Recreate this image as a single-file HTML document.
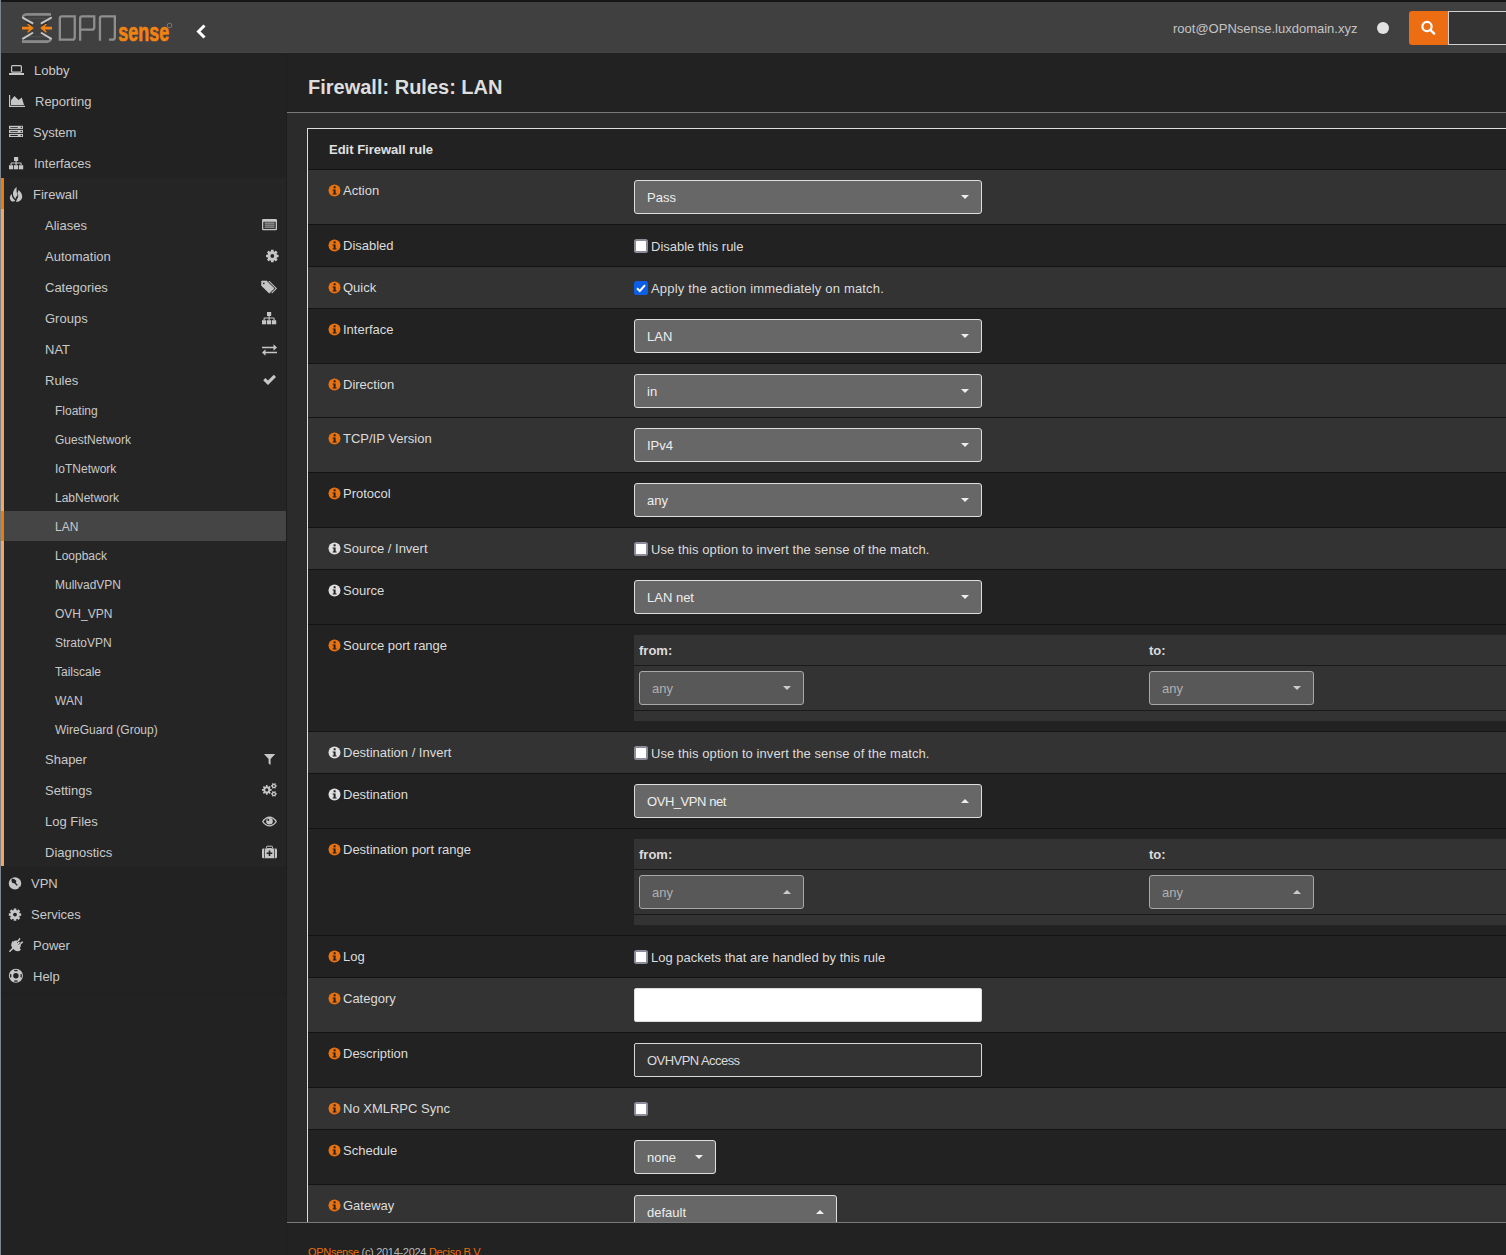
<!DOCTYPE html><html><head><meta charset="utf-8"><style>
*{margin:0;padding:0;box-sizing:border-box}
html,body{width:1506px;height:1255px;overflow:hidden;background:#222;font-family:"Liberation Sans",sans-serif;}
div,span,svg{position:absolute}
.t{white-space:nowrap;color:#c9c9c9;font-size:13px;line-height:15px}
.lbl{white-space:nowrap;color:#dcdcdc;font-size:13px;line-height:15px}
.sel{background:#676767;border:1.5px solid #dedede;border-radius:3px;color:#eee;font-size:13px;line-height:15px}
.sel span{left:12px;top:9px;white-space:nowrap}
.sel.dis{background:#585858;border:1px solid #a8a8a8;color:#b0b0b0}
.car{top:14px;width:0;height:0;border-left:4px solid transparent;border-right:4px solid transparent;border-top:4px solid #eee}
.car.up{top:14px;border-top:none;border-bottom:4px solid #eee}
.dis .car{border-top-color:#ccc}
.dis .car.up{border-bottom-color:#ccc}
.cb{width:14px;height:14px;background:#fff;border:1.5px solid #908e9e;border-radius:2.5px}
</style></head><body>
<div style="left:0px;top:0px;width:1506px;height:2px;background:#161616;"></div>
<div style="left:0px;top:2px;width:1506px;height:51px;background:#404040;"></div>
<div style="left:0px;top:52px;width:1506px;height:1px;background:#454545;"></div>
<div style="left:0px;top:53px;width:287px;height:1202px;background:#222;"></div>
<div style="left:1px;top:178px;width:285px;height:688px;background:#252525;"></div>
<div style="left:286px;top:53px;width:1px;height:1202px;background:#1e1e1e;"></div>
<div style="left:1px;top:53px;width:1505px;height:1px;background:#1f1f1f;"></div>
<div style="left:1px;top:993px;width:285px;height:1px;background:#1f1f1f;"></div>
<div style="left:0px;top:0px;width:1px;height:1255px;background:#7d858c;z-index:9"></div>
<div style="left:1px;top:178px;width:3px;height:31px;background:#f27a00;"></div>
<div style="left:1px;top:209px;width:3px;height:657px;background:#f6a55c;"></div>
<div style="left:1px;top:511px;width:285px;height:30px;background:#454545;"></div>
<div style="left:1px;top:511px;width:3px;height:30px;background:#f27a00;"></div>
<div style="left:287px;top:54px;width:1219px;height:58px;background:#222;"></div>
<div style="left:287px;top:112px;width:1219px;height:1px;background:#7a7a7a;"></div>
<div style="left:287px;top:113px;width:1219px;height:1109px;background:#2b2b2b;"></div>
<div style="left:287px;top:1222px;width:1219px;height:1px;background:#7a7a7a;"></div>
<div style="left:287px;top:1223px;width:1219px;height:32px;background:#222;"></div>
<svg style="left:20px;top:10px" width="160" height="36" viewBox="20 10 160 36">
<path d="M26 14.4 H51" stroke="#8a8a8a" stroke-width="2.7"/>
<path d="M22 41.6 H48" stroke="#8a8a8a" stroke-width="2.9"/>
<path d="M22.8 17.6 Q23 14.4 26.5 14.4" stroke="#8a8a8a" stroke-width="2.2" fill="none"/>
<path d="M50.6 38.8 Q50.4 41.6 47 41.6" stroke="#8a8a8a" stroke-width="2.2" fill="none"/>
<path d="M28 18.4 H46 M28 36.7 H46" stroke="#505050" stroke-width="1"/>
<g stroke="#c4c4c4" stroke-width="2" fill="none" stroke-linecap="round">
<path d="M23 17.8 L32.4 23.2"/><path d="M51 17.8 L41.6 23.2"/>
<path d="M23 38.6 L32.4 33"/><path d="M51 38.6 L41.6 33"/>
</g>
<g stroke="#1a1a1a" stroke-width="1" fill="none">
<path d="M26.5 22.4 L31.6 25.4"/><path d="M47.5 22.4 L42.4 25.4"/>
</g>
<g fill="#f28312" stroke="none">
<path d="M22 26.8 H29.2 L27 24 L28.4 23.8 L33.8 28.1 L28.4 32.5 L27 32.3 L29.2 29.4 H22 Z"/>
<path d="M52 26.8 H44.8 L47 24 L45.6 23.8 L40.2 28.1 L45.6 32.5 L47 32.3 L44.8 29.4 H52 Z"/>
</g>
<g fill="none" stroke="#8e8e8e" stroke-width="2.3">
<path d="M59.85 39.65 V18.35 Q59.85 16.35 61.85 16.35 H74.75 V37.15 Q74.75 39.65 72.25 39.65 Z"/>
<path d="M80.15 40.8 V18.35 Q80.15 16.35 82.15 16.35 H94.25 V27.15 Q94.25 29.65 91.75 29.65 H80.15"/>
<path d="M99.95 40.8 V18.35 Q99.95 16.35 101.95 16.35 H114.85 V37.15 Q114.85 39.65 112.35 39.65 H109"/>
</g>
<text x="118.3" y="41" font-family="Liberation Sans" font-weight="bold" font-size="25.5" fill="#f28312" stroke="#f28312" stroke-width="0.7" textLength="50.8" lengthAdjust="spacingAndGlyphs">sense</text>
<circle cx="169.5" cy="25.5" r="2.3" fill="none" stroke="#888" stroke-width="0.8"/>
</svg>
<svg style="left:194px;top:22px" width="16" height="20" viewBox="0 0 16 20"><path d="M10.5 3.5 L4.5 9.5 L10.5 15.5" fill="none" stroke="#fff" stroke-width="3"/></svg>
<span class="t" style="left:1173px;top:21px;color:#c4c4c4">root@OPNsense.luxdomain.xyz</span>
<div style="left:1377px;top:22px;width:12px;height:12px;background:#e2e2e2;border-radius:50%"></div>
<div style="left:1409px;top:11px;width:39px;height:34px;background:#ec6d12;border-radius:3px 0 0 3px"></div>
<svg style="left:1419px;top:18px" width="18" height="18" viewBox="0 0 18 18"><circle cx="8" cy="8.5" r="4.6" fill="none" stroke="#fff" stroke-width="2.2"/><path d="M11.3 11.8 L15.2 15.6" stroke="#fff" stroke-width="2.4" stroke-linecap="round"/></svg>
<div style="left:1448px;top:11px;width:70px;height:34px;background:#333;border:1px solid #d0d0d0"></div>
<span class="t" style="left:34px;top:63px;">Lobby</span>
<span class="t" style="left:35px;top:94px;">Reporting</span>
<span class="t" style="left:33px;top:125px;">System</span>
<span class="t" style="left:34px;top:156px;">Interfaces</span>
<span class="t" style="left:33px;top:187px;">Firewall</span>
<span class="t" style="left:45px;top:218px;">Aliases</span>
<span class="t" style="left:45px;top:249px;">Automation</span>
<span class="t" style="left:45px;top:280px;">Categories</span>
<span class="t" style="left:45px;top:311px;">Groups</span>
<span class="t" style="left:45px;top:342px;">NAT</span>
<span class="t" style="left:45px;top:373px;">Rules</span>
<span class="t" style="left:55px;top:404px;font-size:12px;line-height:14px">Floating</span>
<span class="t" style="left:55px;top:433px;font-size:12px;line-height:14px">GuestNetwork</span>
<span class="t" style="left:55px;top:462px;font-size:12px;line-height:14px">IoTNetwork</span>
<span class="t" style="left:55px;top:491px;font-size:12px;line-height:14px">LabNetwork</span>
<span class="t" style="left:55px;top:520px;font-size:12px;line-height:14px">LAN</span>
<span class="t" style="left:55px;top:549px;font-size:12px;line-height:14px">Loopback</span>
<span class="t" style="left:55px;top:578px;font-size:12px;line-height:14px">MullvadVPN</span>
<span class="t" style="left:55px;top:607px;font-size:12px;line-height:14px">OVH_VPN</span>
<span class="t" style="left:55px;top:636px;font-size:12px;line-height:14px">StratoVPN</span>
<span class="t" style="left:55px;top:665px;font-size:12px;line-height:14px">Tailscale</span>
<span class="t" style="left:55px;top:694px;font-size:12px;line-height:14px">WAN</span>
<span class="t" style="left:55px;top:723px;font-size:12px;line-height:14px">WireGuard (Group)</span>
<span class="t" style="left:45px;top:752px;">Shaper</span>
<span class="t" style="left:45px;top:783px;">Settings</span>
<span class="t" style="left:45px;top:814px;">Log Files</span>
<span class="t" style="left:45px;top:845px;">Diagnostics</span>
<span class="t" style="left:31px;top:876px;">VPN</span>
<span class="t" style="left:31px;top:907px;">Services</span>
<span class="t" style="left:33px;top:938px;">Power</span>
<span class="t" style="left:33px;top:969px;">Help</span>
<svg style="left:8px;top:64px" width="17" height="12" viewBox="8 64 17 12"><rect x="11.6" y="65.6" width="9.8" height="6.6" rx="1" fill="none" stroke="#c6c6c6" stroke-width="1.2"/><rect x="9" y="73" width="15" height="2" fill="#c6c6c6"/></svg><svg style="left:8px;top:94px" width="18" height="14" viewBox="8 94 18 14"><path d="M9.6 95 V106.4 H25" fill="none" stroke="#c6c6c6" stroke-width="1.2"/><path d="M11 100.2 L14.4 96 L18.6 100 L21.8 97.6 L24 105 H11 Z" fill="#c6c6c6"/></svg><svg style="left:8px;top:124px" width="17" height="15" viewBox="8 124 17 15"><rect x="9" y="125.80" width="14" height="3.1" fill="#c6c6c6"/><rect x="10.2" y="126.90" width="7.8" height="0.9" rx="0.45" fill="#222"/><circle cx="21.3" cy="127.35" r="0.75" fill="#222"/><rect x="9" y="129.85" width="14" height="3.1" fill="#c6c6c6"/><rect x="10.2" y="130.95" width="7.8" height="0.9" rx="0.45" fill="#222"/><circle cx="21.3" cy="131.40" r="0.75" fill="#222"/><rect x="9" y="133.90" width="14" height="3.1" fill="#c6c6c6"/><rect x="10.2" y="135.00" width="7.8" height="0.9" rx="0.45" fill="#222"/><circle cx="21.3" cy="135.45" r="0.75" fill="#222"/></svg><svg style="left:8px;top:156px" width="16" height="14" viewBox="8 156 16 14"><rect x="14" y="157" width="4.2" height="4" fill="#c6c6c6"/><path d="M16.1 161 V163.2 M11.1 165 V163.6 Q11.1 163 11.8 163 H20.4 Q21.1 163 21.1 163.6 V165 M16.1 163 V165" stroke="#c6c6c6" stroke-width="1.1" fill="none"/><rect x="9" y="165.2" width="4.2" height="4.1" fill="#c6c6c6"/><rect x="14" y="165.2" width="4.2" height="4.1" fill="#c6c6c6"/><rect x="19" y="165.2" width="4.2" height="4.1" fill="#c6c6c6"/></svg><svg style="left:9px;top:186px" width="14" height="17" viewBox="9 186 14 17"><path d="M16.6 187 C14.2 189 12.6 191.5 13 194.6 C13.3 196.5 14.6 197.8 15.4 199 C15.8 197.6 16.2 196.2 17.6 195.4 C16.6 193 16.4 190 16.6 187 Z" fill="#c6c6c6"/><path d="M18.4 190 C18.3 191.5 17.7 192.6 17.1 193.2 C18 194 18.5 195 18.2 196.4 C17.8 198 16.4 199.4 16.2 202 C19.6 202.2 22.2 199.8 22.2 196.6 C22.2 193.8 20.4 191.6 18.4 190 Z" fill="#c6c6c6"/><path d="M11.6 194 C10.4 195.4 9.8 196.8 9.9 198.2 C10 200.2 11.4 201.6 13.2 201.6 C14.2 201.6 14.8 201 15.1 200.4 C13.6 199.2 12.6 198 12.2 196.8 C12 196 11.8 195 11.6 194 Z" fill="#c6c6c6"/></svg><svg style="left:261px;top:218px" width="17" height="13" viewBox="261 218 17 13"><rect x="262" y="219" width="15" height="11.2" rx="1.3" fill="#c6c6c6"/><rect x="263.3" y="221.8" width="12.4" height="7.1" fill="#252525"/><rect x="264.6" y="222.6" width="10" height="1" fill="#c6c6c6"/><rect x="264.6" y="224.6" width="10" height="1" fill="#c6c6c6"/><rect x="264.6" y="226.6" width="10" height="1" fill="#c6c6c6"/></svg><svg style="left:265px;top:249px" width="15" height="15" viewBox="265 249 15 15"><path d="M277.03 254.73 L278.55 254.63 L278.55 257.37 L277.03 257.27 L276.55 258.44 L277.69 259.45 L275.75 261.39 L274.74 260.25 L273.57 260.73 L273.67 262.25 L270.93 262.25 L271.03 260.73 L269.86 260.25 L268.85 261.39 L266.91 259.45 L268.05 258.44 L267.57 257.27 L266.05 257.37 L266.05 254.63 L267.57 254.73 L268.05 253.56 L266.91 252.55 L268.85 250.61 L269.86 251.75 L271.03 251.27 L270.93 249.75 L273.67 249.75 L273.57 251.27 L274.74 251.75 L275.75 250.61 L277.69 252.55 L276.55 253.56 Z" fill="#c6c6c6"/><circle cx="272.3" cy="256" r="1.9" fill="#252525"/></svg><svg style="left:260px;top:280px" width="19" height="15" viewBox="260 280 19 15"><path d="M261.6 281 H266.6 L274.2 288.4 L269.2 293.2 L261.6 285.8 Z" fill="#c6c6c6" stroke="#c6c6c6" stroke-width="0.6" stroke-linejoin="round"/><circle cx="263.8" cy="283.3" r="0.9" fill="#252525"/><path d="M268.2 281 H269.6 L277 288.4 L272 293.4 L271.3 292.7 L275.6 288.4 Z" fill="#c6c6c6"/></svg><svg style="left:261px;top:311px" width="17" height="15" viewBox="261 311 17 15"><rect x="267" y="312" width="4.2" height="4" fill="#c6c6c6"/><path d="M269.1 316 V318.2 M264.1 320 V318.6 Q264.1 318 264.8 318 H273.4 Q274.1 318 274.1 318.6 V320 M269.1 318 V320" stroke="#c6c6c6" stroke-width="1.1" fill="none"/><rect x="262" y="320.2" width="4.2" height="4.1" fill="#c6c6c6"/><rect x="267" y="320.2" width="4.2" height="4.1" fill="#c6c6c6"/><rect x="272" y="320.2" width="4.2" height="4.1" fill="#c6c6c6"/></svg><svg style="left:261px;top:343px" width="17" height="13" viewBox="261 343 17 13"><path d="M262 346.8 H273.5 V344.3 L277 347.5 L273.5 350.7 V348.2 H262 Z" fill="#c6c6c6"/><path d="M277 351.8 H265.5 V349.3 L262 352.5 L265.5 355.7 V353.2 H277 Z" fill="#c6c6c6"/></svg><svg style="left:262px;top:374px" width="15" height="12" viewBox="262 374 15 12"><path d="M263.2 380.2 L265.4 378 L268 380.6 L273.8 374.8 L276 377 L268 385 Z" fill="#c6c6c6"/></svg><svg style="left:263px;top:753px" width="13" height="13" viewBox="263 753 13 13"><path d="M264 754 H275.2 L270.6 759 V765 L268.6 763.4 V759 Z" fill="#c6c6c6"/></svg><svg style="left:260px;top:781px" width="19" height="18" viewBox="260 781 19 18"><path d="M270.31 789.10 L271.62 789.04 L271.62 790.76 L270.31 790.70 L269.85 791.82 L270.82 792.70 L269.60 793.92 L268.72 792.95 L267.60 793.41 L267.66 794.72 L265.94 794.72 L266.00 793.41 L264.88 792.95 L264.00 793.92 L262.78 792.70 L263.75 791.82 L263.29 790.70 L261.98 790.76 L261.98 789.04 L263.29 789.10 L263.75 787.98 L262.78 787.10 L264.00 785.88 L264.88 786.85 L266.00 786.39 L265.94 785.08 L267.66 785.08 L267.60 786.39 L268.72 786.85 L269.60 785.88 L270.82 787.10 L269.85 787.98 Z" fill="#c6c6c6"/><circle cx="266.8" cy="789.9" r="1.6" fill="#252525"/><path d="M276.01 785.29 L276.83 785.25 L276.83 786.55 L276.01 786.51 L275.49 787.42 L275.93 788.11 L274.80 788.76 L274.42 788.04 L273.38 788.04 L273.00 788.76 L271.87 788.11 L272.31 787.42 L271.79 786.51 L270.97 786.55 L270.97 785.25 L271.79 785.29 L272.31 784.38 L271.87 783.69 L273.00 783.04 L273.38 783.76 L274.42 783.76 L274.80 783.04 L275.93 783.69 L275.49 784.38 Z" fill="#c6c6c6"/><circle cx="273.9" cy="785.9" r="0.95" fill="#252525"/><path d="M276.01 793.29 L276.83 793.25 L276.83 794.55 L276.01 794.51 L275.49 795.42 L275.93 796.11 L274.80 796.76 L274.42 796.04 L273.38 796.04 L273.00 796.76 L271.87 796.11 L272.31 795.42 L271.79 794.51 L270.97 794.55 L270.97 793.25 L271.79 793.29 L272.31 792.38 L271.87 791.69 L273.00 791.04 L273.38 791.76 L274.42 791.76 L274.80 791.04 L275.93 791.69 L275.49 792.38 Z" fill="#c6c6c6"/><circle cx="273.9" cy="793.9" r="0.95" fill="#252525"/></svg><svg style="left:261px;top:815px" width="17" height="13" viewBox="261 815 17 13"><path d="M262 821.5 C264 818 267 816.6 269.5 816.6 C272 816.6 275 818 277 821.5 C275 825 272 826.5 269.5 826.5 C267 826.5 264 825 262 821.5 Z" fill="#c6c6c6"/><path d="M263.5 821.5 C265 819 267.5 818 269.5 818 C271.5 818 274 819 275.5 821.5 C274 824 271.5 825.2 269.5 825.2 C267.5 825.2 265 824 263.5 821.5 Z" fill="#252525"/><circle cx="269.5" cy="821.2" r="3.3" fill="#c6c6c6"/><circle cx="268.3" cy="820" r="1" fill="#252525"/></svg><svg style="left:261px;top:845px" width="17" height="14" viewBox="261 845 17 14"><rect x="266.5" y="846.2" width="6" height="2.4" rx="0.8" fill="none" stroke="#c6c6c6" stroke-width="1"/><rect x="262" y="848.4" width="15" height="9.9" rx="1.4" fill="#c6c6c6"/><rect x="264.2" y="848.4" width="0.7" height="9.9" fill="#252525"/><rect x="274.1" y="848.4" width="0.7" height="9.9" fill="#252525"/><path d="M268.7 850.5 H270.3 V852.5 H272.3 V854.1 H270.3 V856.1 H268.7 V854.1 H266.7 V852.5 H268.7 Z" fill="#252525"/></svg><svg style="left:8px;top:876px" width="15" height="15" viewBox="8 876 15 15"><circle cx="15" cy="883.4" r="6.2" fill="#c6c6c6"/><path d="M12 878.6 L14.6 879.2 L16.4 881 L15.8 883 L17.6 884.6 L17 886 L14.6 883.6 L12.2 882.8 L11.4 880.6 Z" fill="#222"/><path d="M18.6 887.6 L19.6 886.4 L20.4 887.2 L19.4 888.4 Z" fill="#222"/></svg><svg style="left:8px;top:907px" width="15" height="15" viewBox="8 907 15 15"><path d="M19.63 913.35 L21.15 913.25 L21.15 915.95 L19.63 915.85 L19.16 916.99 L20.31 918.00 L18.40 919.91 L17.39 918.76 L16.25 919.23 L16.35 920.75 L13.65 920.75 L13.75 919.23 L12.61 918.76 L11.60 919.91 L9.69 918.00 L10.84 916.99 L10.37 915.85 L8.85 915.95 L8.85 913.25 L10.37 913.35 L10.84 912.21 L9.69 911.20 L11.60 909.29 L12.61 910.44 L13.75 909.97 L13.65 908.45 L16.35 908.45 L16.25 909.97 L17.39 910.44 L18.40 909.29 L20.31 911.20 L19.16 912.21 Z" fill="#c6c6c6"/><circle cx="15" cy="914.6" r="1.9" fill="#222"/></svg><svg style="left:8px;top:936px" width="17" height="17" viewBox="8 936 17 17"><path d="M9.9 951.2 L12.6 948.5" stroke="#c6c6c6" stroke-width="1.6" stroke-linecap="round"/><path d="M12.6 941 L21 949.4 A4.9 4.9 0 0 1 15 950.6 L14.2 949.8 A5.94 5.94 0 0 1 12.6 941 Z" fill="#c6c6c6"/><circle cx="16.2" cy="945.2" r="4.6" fill="#c6c6c6"/><path d="M17.8 941.6 L19.6 938.9 M19.6 944.4 L22.3 942.2" stroke="#c6c6c6" stroke-width="1.6" stroke-linecap="round"/><path d="M17.2 942.8 L18.6 941.4 M18.6 944.6 L20 943.2" stroke="#222" stroke-width="0.9"/></svg><svg style="left:8px;top:968px" width="16" height="16" viewBox="8 968 16 16"><circle cx="15.9" cy="975.8" r="7" fill="#c6c6c6"/><circle cx="15.9" cy="975.8" r="2.7" fill="#222"/><rect x="14.25" y="969.9" width="3.3" height="1.3" fill="#222"/><rect x="14.25" y="980.4" width="3.3" height="1.3" fill="#222"/><rect x="10.0" y="974.15" width="1.3" height="3.3" fill="#222"/><rect x="20.5" y="974.15" width="1.3" height="3.3" fill="#222"/></svg>
<span class="t" style="left:308px;top:76px;font-size:20px;line-height:23px;font-weight:bold;color:#dedede">Firewall: Rules: LAN</span>
<div style="left:307px;top:128px;width:1199px;height:1px;background:#dcdcdc;"></div>
<div style="left:307px;top:128px;width:1px;height:1094px;background:#dcdcdc;"></div>
<div style="left:308px;top:129px;width:1198px;height:40px;background:#222;"></div>
<span class="lbl" style="left:329px;top:142px;font-weight:bold;color:#e0e0e0">Edit Firewall rule</span>
<div style="left:308px;top:169px;width:1198px;height:1px;background:#141414;"></div>
<div style="left:308px;top:170px;width:1198px;height:54px;background:#333;"></div>
<div style="left:308px;top:224px;width:1198px;height:1px;background:#141414;"></div>
<svg style="left:328px;top:184px" width="13" height="13" viewBox="0 0 13 13"><circle cx="6.5" cy="6.5" r="6" fill="#ea7210"/><rect x="5.6" y="2.3" width="2" height="2" fill="#222"/><path d="M4.6 5.4 H7.6 V9.6 H8.6 V10.6 H4.6 V9.6 H5.6 V6.4 H4.6 Z" fill="#222"/></svg>
<span class="lbl" style="left:343px;top:183px;">Action</span>
<div class="sel" style="left:634px;top:180px;width:348px;height:34px"><span style="">Pass</span><div class="car" style="right:12px"></div></div>
<div style="left:308px;top:225px;width:1198px;height:41px;background:#222;"></div>
<div style="left:308px;top:266px;width:1198px;height:1px;background:#141414;"></div>
<svg style="left:328px;top:239px" width="13" height="13" viewBox="0 0 13 13"><circle cx="6.5" cy="6.5" r="6" fill="#ea7210"/><rect x="5.6" y="2.3" width="2" height="2" fill="#222"/><path d="M4.6 5.4 H7.6 V9.6 H8.6 V10.6 H4.6 V9.6 H5.6 V6.4 H4.6 Z" fill="#222"/></svg>
<span class="lbl" style="left:343px;top:238px;">Disabled</span>
<svg style="left:634px;top:239px" width="14" height="14" viewBox="0 0 14 14"><rect x="1" y="1" width="12" height="12" rx="1.5" fill="#fff" stroke="#8e8c9a" stroke-width="2"/></svg>
<span class="lbl" style="left:651px;top:239px;">Disable this rule</span>
<div style="left:308px;top:267px;width:1198px;height:41px;background:#333;"></div>
<div style="left:308px;top:308px;width:1198px;height:1px;background:#141414;"></div>
<svg style="left:328px;top:281px" width="13" height="13" viewBox="0 0 13 13"><circle cx="6.5" cy="6.5" r="6" fill="#ea7210"/><rect x="5.6" y="2.3" width="2" height="2" fill="#222"/><path d="M4.6 5.4 H7.6 V9.6 H8.6 V10.6 H4.6 V9.6 H5.6 V6.4 H4.6 Z" fill="#222"/></svg>
<span class="lbl" style="left:343px;top:280px;">Quick</span>
<svg style="left:634px;top:281px" width="14" height="14" viewBox="0 0 14 14"><rect x="0" y="0" width="14" height="14" rx="2.5" fill="#0b5fe6"/><path d="M3 7.2 L5.8 10 L11 4.2" fill="none" stroke="#fff" stroke-width="2"/></svg>
<span class="lbl" style="left:651px;top:281px;letter-spacing:0.18px">Apply the action immediately on match.</span>
<div style="left:308px;top:309px;width:1198px;height:54px;background:#222;"></div>
<div style="left:308px;top:363px;width:1198px;height:1px;background:#141414;"></div>
<svg style="left:328px;top:323px" width="13" height="13" viewBox="0 0 13 13"><circle cx="6.5" cy="6.5" r="6" fill="#ea7210"/><rect x="5.6" y="2.3" width="2" height="2" fill="#222"/><path d="M4.6 5.4 H7.6 V9.6 H8.6 V10.6 H4.6 V9.6 H5.6 V6.4 H4.6 Z" fill="#222"/></svg>
<span class="lbl" style="left:343px;top:322px;">Interface</span>
<div class="sel" style="left:634px;top:319px;width:348px;height:34px"><span style="">LAN</span><div class="car" style="right:12px"></div></div>
<div style="left:308px;top:364px;width:1198px;height:53px;background:#333;"></div>
<div style="left:308px;top:417px;width:1198px;height:1px;background:#141414;"></div>
<svg style="left:328px;top:378px" width="13" height="13" viewBox="0 0 13 13"><circle cx="6.5" cy="6.5" r="6" fill="#ea7210"/><rect x="5.6" y="2.3" width="2" height="2" fill="#222"/><path d="M4.6 5.4 H7.6 V9.6 H8.6 V10.6 H4.6 V9.6 H5.6 V6.4 H4.6 Z" fill="#222"/></svg>
<span class="lbl" style="left:343px;top:377px;">Direction</span>
<div class="sel" style="left:634px;top:374px;width:348px;height:34px"><span style="">in</span><div class="car" style="right:12px"></div></div>
<div style="left:308px;top:418px;width:1198px;height:54px;background:#333;"></div>
<div style="left:308px;top:472px;width:1198px;height:1px;background:#141414;"></div>
<svg style="left:328px;top:432px" width="13" height="13" viewBox="0 0 13 13"><circle cx="6.5" cy="6.5" r="6" fill="#ea7210"/><rect x="5.6" y="2.3" width="2" height="2" fill="#222"/><path d="M4.6 5.4 H7.6 V9.6 H8.6 V10.6 H4.6 V9.6 H5.6 V6.4 H4.6 Z" fill="#222"/></svg>
<span class="lbl" style="left:343px;top:431px;">TCP/IP Version</span>
<div class="sel" style="left:634px;top:428px;width:348px;height:34px"><span style="">IPv4</span><div class="car" style="right:12px"></div></div>
<div style="left:308px;top:473px;width:1198px;height:54px;background:#222;"></div>
<div style="left:308px;top:527px;width:1198px;height:1px;background:#141414;"></div>
<svg style="left:328px;top:487px" width="13" height="13" viewBox="0 0 13 13"><circle cx="6.5" cy="6.5" r="6" fill="#ea7210"/><rect x="5.6" y="2.3" width="2" height="2" fill="#222"/><path d="M4.6 5.4 H7.6 V9.6 H8.6 V10.6 H4.6 V9.6 H5.6 V6.4 H4.6 Z" fill="#222"/></svg>
<span class="lbl" style="left:343px;top:486px;">Protocol</span>
<div class="sel" style="left:634px;top:483px;width:348px;height:34px"><span style="">any</span><div class="car" style="right:12px"></div></div>
<div style="left:308px;top:528px;width:1198px;height:41px;background:#333;"></div>
<div style="left:308px;top:569px;width:1198px;height:1px;background:#141414;"></div>
<svg style="left:328px;top:542px" width="13" height="13" viewBox="0 0 13 13"><circle cx="6.5" cy="6.5" r="6" fill="#e0e0e0"/><rect x="5.6" y="2.3" width="2" height="2" fill="#222"/><path d="M4.6 5.4 H7.6 V9.6 H8.6 V10.6 H4.6 V9.6 H5.6 V6.4 H4.6 Z" fill="#222"/></svg>
<span class="lbl" style="left:343px;top:541px;">Source / Invert</span>
<svg style="left:634px;top:542px" width="14" height="14" viewBox="0 0 14 14"><rect x="1" y="1" width="12" height="12" rx="1.5" fill="#fff" stroke="#8e8c9a" stroke-width="2"/></svg>
<span class="lbl" style="left:651px;top:542px;letter-spacing:0.08px">Use this option to invert the sense of the match.</span>
<div style="left:308px;top:570px;width:1198px;height:54px;background:#222;"></div>
<div style="left:308px;top:624px;width:1198px;height:1px;background:#141414;"></div>
<svg style="left:328px;top:584px" width="13" height="13" viewBox="0 0 13 13"><circle cx="6.5" cy="6.5" r="6" fill="#e0e0e0"/><rect x="5.6" y="2.3" width="2" height="2" fill="#222"/><path d="M4.6 5.4 H7.6 V9.6 H8.6 V10.6 H4.6 V9.6 H5.6 V6.4 H4.6 Z" fill="#222"/></svg>
<span class="lbl" style="left:343px;top:583px;">Source</span>
<div class="sel" style="left:634px;top:580px;width:348px;height:34px"><span style="">LAN net</span><div class="car" style="right:12px"></div></div>
<div style="left:308px;top:625px;width:1198px;height:106px;background:#222;"></div>
<div style="left:308px;top:731px;width:1198px;height:1px;background:#141414;"></div>
<svg style="left:328px;top:639px" width="13" height="13" viewBox="0 0 13 13"><circle cx="6.5" cy="6.5" r="6" fill="#ea7210"/><rect x="5.6" y="2.3" width="2" height="2" fill="#222"/><path d="M4.6 5.4 H7.6 V9.6 H8.6 V10.6 H4.6 V9.6 H5.6 V6.4 H4.6 Z" fill="#222"/></svg>
<span class="lbl" style="left:343px;top:638px;">Source port range</span>
<div style="left:634px;top:635px;width:872px;height:86px;background:#333;"></div>
<div style="left:634px;top:665px;width:872px;height:1px;background:#1a1a1a;"></div>
<div style="left:634px;top:710px;width:872px;height:1px;background:#1a1a1a;"></div>
<span class="lbl" style="left:639px;top:643px;font-weight:bold">from:</span>
<span class="lbl" style="left:1149px;top:643px;font-weight:bold">to:</span>
<div class="sel dis" style="left:639px;top:671px;width:165px;height:34px"><span>any</span><div class="car" style="right:12px"></div></div>
<div class="sel dis" style="left:1149px;top:671px;width:165px;height:34px"><span>any</span><div class="car" style="right:12px"></div></div>
<div style="left:308px;top:732px;width:1198px;height:41px;background:#333;"></div>
<div style="left:308px;top:773px;width:1198px;height:1px;background:#141414;"></div>
<svg style="left:328px;top:746px" width="13" height="13" viewBox="0 0 13 13"><circle cx="6.5" cy="6.5" r="6" fill="#e0e0e0"/><rect x="5.6" y="2.3" width="2" height="2" fill="#222"/><path d="M4.6 5.4 H7.6 V9.6 H8.6 V10.6 H4.6 V9.6 H5.6 V6.4 H4.6 Z" fill="#222"/></svg>
<span class="lbl" style="left:343px;top:745px;">Destination / Invert</span>
<svg style="left:634px;top:746px" width="14" height="14" viewBox="0 0 14 14"><rect x="1" y="1" width="12" height="12" rx="1.5" fill="#fff" stroke="#8e8c9a" stroke-width="2"/></svg>
<span class="lbl" style="left:651px;top:746px;letter-spacing:0.08px">Use this option to invert the sense of the match.</span>
<div style="left:308px;top:774px;width:1198px;height:54px;background:#222;"></div>
<div style="left:308px;top:828px;width:1198px;height:1px;background:#141414;"></div>
<svg style="left:328px;top:788px" width="13" height="13" viewBox="0 0 13 13"><circle cx="6.5" cy="6.5" r="6" fill="#e0e0e0"/><rect x="5.6" y="2.3" width="2" height="2" fill="#222"/><path d="M4.6 5.4 H7.6 V9.6 H8.6 V10.6 H4.6 V9.6 H5.6 V6.4 H4.6 Z" fill="#222"/></svg>
<span class="lbl" style="left:343px;top:787px;">Destination</span>
<div class="sel" style="left:634px;top:784px;width:348px;height:34px"><span style="letter-spacing:-0.45px">OVH_VPN net</span><div class="car up" style="right:12px"></div></div>
<div style="left:308px;top:829px;width:1198px;height:106px;background:#222;"></div>
<div style="left:308px;top:935px;width:1198px;height:1px;background:#141414;"></div>
<svg style="left:328px;top:843px" width="13" height="13" viewBox="0 0 13 13"><circle cx="6.5" cy="6.5" r="6" fill="#ea7210"/><rect x="5.6" y="2.3" width="2" height="2" fill="#222"/><path d="M4.6 5.4 H7.6 V9.6 H8.6 V10.6 H4.6 V9.6 H5.6 V6.4 H4.6 Z" fill="#222"/></svg>
<span class="lbl" style="left:343px;top:842px;">Destination port range</span>
<div style="left:634px;top:839px;width:872px;height:86px;background:#333;"></div>
<div style="left:634px;top:869px;width:872px;height:1px;background:#1a1a1a;"></div>
<div style="left:634px;top:914px;width:872px;height:1px;background:#1a1a1a;"></div>
<span class="lbl" style="left:639px;top:847px;font-weight:bold">from:</span>
<span class="lbl" style="left:1149px;top:847px;font-weight:bold">to:</span>
<div class="sel dis" style="left:639px;top:875px;width:165px;height:34px"><span>any</span><div class="car up" style="right:12px"></div></div>
<div class="sel dis" style="left:1149px;top:875px;width:165px;height:34px"><span>any</span><div class="car up" style="right:12px"></div></div>
<div style="left:308px;top:936px;width:1198px;height:41px;background:#222;"></div>
<div style="left:308px;top:977px;width:1198px;height:1px;background:#141414;"></div>
<svg style="left:328px;top:950px" width="13" height="13" viewBox="0 0 13 13"><circle cx="6.5" cy="6.5" r="6" fill="#ea7210"/><rect x="5.6" y="2.3" width="2" height="2" fill="#222"/><path d="M4.6 5.4 H7.6 V9.6 H8.6 V10.6 H4.6 V9.6 H5.6 V6.4 H4.6 Z" fill="#222"/></svg>
<span class="lbl" style="left:343px;top:949px;">Log</span>
<svg style="left:634px;top:950px" width="14" height="14" viewBox="0 0 14 14"><rect x="1" y="1" width="12" height="12" rx="1.5" fill="#fff" stroke="#8e8c9a" stroke-width="2"/></svg>
<span class="lbl" style="left:651px;top:950px;">Log packets that are handled by this rule</span>
<div style="left:308px;top:978px;width:1198px;height:54px;background:#333;"></div>
<div style="left:308px;top:1032px;width:1198px;height:1px;background:#141414;"></div>
<svg style="left:328px;top:992px" width="13" height="13" viewBox="0 0 13 13"><circle cx="6.5" cy="6.5" r="6" fill="#ea7210"/><rect x="5.6" y="2.3" width="2" height="2" fill="#222"/><path d="M4.6 5.4 H7.6 V9.6 H8.6 V10.6 H4.6 V9.6 H5.6 V6.4 H4.6 Z" fill="#222"/></svg>
<span class="lbl" style="left:343px;top:991px;">Category</span>
<div style="left:634px;top:988px;width:348px;height:34px;background:#fff;border:1px solid #ddd;border-radius:2px"></div>
<div style="left:308px;top:1033px;width:1198px;height:54px;background:#222;"></div>
<div style="left:308px;top:1087px;width:1198px;height:1px;background:#141414;"></div>
<svg style="left:328px;top:1047px" width="13" height="13" viewBox="0 0 13 13"><circle cx="6.5" cy="6.5" r="6" fill="#ea7210"/><rect x="5.6" y="2.3" width="2" height="2" fill="#222"/><path d="M4.6 5.4 H7.6 V9.6 H8.6 V10.6 H4.6 V9.6 H5.6 V6.4 H4.6 Z" fill="#222"/></svg>
<span class="lbl" style="left:343px;top:1046px;">Description</span>
<div style="left:634px;top:1043px;width:348px;height:34px;background:#333;border:1px solid #d8d8d8;border-radius:2px"><span class="lbl" style="left:12px;top:9px;letter-spacing:-0.55px">OVHVPN Access</span></div>
<div style="left:308px;top:1088px;width:1198px;height:41px;background:#333;"></div>
<div style="left:308px;top:1129px;width:1198px;height:1px;background:#141414;"></div>
<svg style="left:328px;top:1102px" width="13" height="13" viewBox="0 0 13 13"><circle cx="6.5" cy="6.5" r="6" fill="#ea7210"/><rect x="5.6" y="2.3" width="2" height="2" fill="#222"/><path d="M4.6 5.4 H7.6 V9.6 H8.6 V10.6 H4.6 V9.6 H5.6 V6.4 H4.6 Z" fill="#222"/></svg>
<span class="lbl" style="left:343px;top:1101px;">No XMLRPC Sync</span>
<svg style="left:634px;top:1102px" width="14" height="14" viewBox="0 0 14 14"><rect x="1" y="1" width="12" height="12" rx="1.5" fill="#fff" stroke="#8e8c9a" stroke-width="2"/></svg>
<div style="left:308px;top:1130px;width:1198px;height:54px;background:#222;"></div>
<div style="left:308px;top:1184px;width:1198px;height:1px;background:#141414;"></div>
<svg style="left:328px;top:1144px" width="13" height="13" viewBox="0 0 13 13"><circle cx="6.5" cy="6.5" r="6" fill="#ea7210"/><rect x="5.6" y="2.3" width="2" height="2" fill="#222"/><path d="M4.6 5.4 H7.6 V9.6 H8.6 V10.6 H4.6 V9.6 H5.6 V6.4 H4.6 Z" fill="#222"/></svg>
<span class="lbl" style="left:343px;top:1143px;">Schedule</span>
<div class="sel" style="left:634px;top:1140px;width:82px;height:34px"><span>none</span><div class="car" style="right:12px"></div></div>
<div style="left:308px;top:1185px;width:1198px;height:55px;background:#333;"></div>
<svg style="left:328px;top:1199px" width="13" height="13" viewBox="0 0 13 13"><circle cx="6.5" cy="6.5" r="6" fill="#ea7210"/><rect x="5.6" y="2.3" width="2" height="2" fill="#222"/><path d="M4.6 5.4 H7.6 V9.6 H8.6 V10.6 H4.6 V9.6 H5.6 V6.4 H4.6 Z" fill="#222"/></svg>
<span class="lbl" style="left:343px;top:1198px;">Gateway</span>
<div class="sel" style="left:634px;top:1195px;width:203px;height:34px"><span>default</span><div class="car up" style="right:12px"></div></div>
<div style="left:287px;top:1222px;width:1219px;height:1px;background:#7a7a7a;"></div>
<div style="left:287px;top:1223px;width:1219px;height:32px;background:#222;"></div>
<span class="t" style="left:308px;top:1246px;font-size:11px;line-height:13px;letter-spacing:-0.3px;color:#bbb"><span style="position:static;color:#e8700f">OPNsense</span> (c) 2014-2024 <span style="position:static;color:#e8700f">Deciso B.V.</span></span>
</body></html>
